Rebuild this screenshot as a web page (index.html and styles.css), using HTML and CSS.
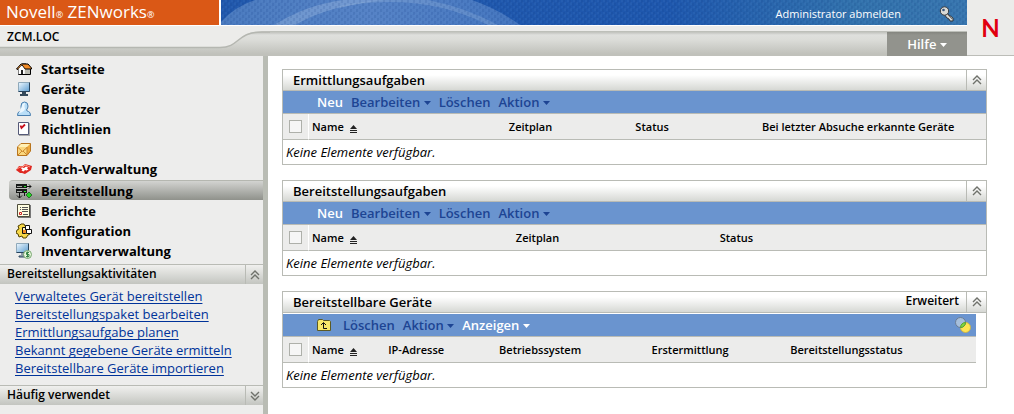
FILE: index.html
```html
<!DOCTYPE html>
<html lang="de">
<head>
<meta charset="utf-8">
<title>Novell ZENworks – Bereitstellung</title>
<link rel="stylesheet" href="styles.css">
</head>
<body>
<svg class="sprites" aria-hidden="true">
  <symbol id="up" viewBox="0 0 10 10"><path d="M1 5l4-4 4 4M1 9l4-4 4 4" fill="none" stroke="#6f716b" stroke-width="1.4"/></symbol>
  <symbol id="down" viewBox="0 0 10 10"><path d="M1 1l4 4 4-4M1 5l4 4 4-4" fill="none" stroke="#6f716b" stroke-width="1.4"/></symbol>
  <symbol id="caret" viewBox="0 0 7 4"><path d="M0 0h7L3.500 4z" fill="currentColor"/></symbol>
  <symbol id="sort" viewBox="0 0 7 8"><path d="M3.500 0L7 4H0zM0 5h7v1H0zM0 7h7v1H0z" fill="#222"/></symbol>
</svg>
<header class="header">
  <div class="header-main">
    <div class="top">
      <div class="brand"><span>Novell<small>®</small> ZENworks<small>®</small></span></div>
      <div class="banner">
        <svg class="swirl" width="746" height="25" viewBox="0 0 746 25" aria-hidden="true">
          <defs>
            <pattern id="weave" width="6" height="6" patternUnits="userSpaceOnUse"><path d="M1 0v3M4 3v3" stroke="#0c3480" stroke-opacity=".25"/><path d="M2 2v3M5 0v2" stroke="#6b9bdf" stroke-opacity=".16"/></pattern>
            <linearGradient id="haze"><stop offset="0" stop-color="#8bb0dc" stop-opacity=".38"/><stop offset=".5" stop-color="#8fb0e0" stop-opacity=".48"/><stop offset="1" stop-color="#7fa5da" stop-opacity=".38"/></linearGradient>
          </defs>
          <path d="M0 22Q13 7 34 0H251Q279 10 299 25H0z" fill="url(#haze)"/>
          <path d="M53 25Q85 5 122 0H165Q108 5 74 25z" fill="#a8c4e4" fill-opacity=".35"/>
          <path d="M119 6Q150 0 165 0H207Q246 8 277 25H267Q220 1 165 2Q140 2 119 8z" fill="#a8c4e4" fill-opacity=".25"/>
          <rect width="746" height="25" fill="url(#weave)"/>
        </svg>
        <a class="logout" href="#">Administrator abmelden</a>
        <svg class="key" width="16" height="16" viewBox="0 0 16 16" aria-hidden="true"><path d="M6 6l8 6v3h-3l-1-2-2-1-3-4z" fill="#d8d8d4" stroke="#35383c"/><circle cx="5.500" cy="5" r="4.200" fill="#d9d9d5" stroke="#35383c"/><circle cx="4.500" cy="4" r="1.300" fill="#35537b"/><path d="M8 8l5 5" stroke="#777"/></svg>
      </div>
    </div>
    <div class="subbar">
      <svg class="curve" width="270" height="30" viewBox="0 0 270 30" aria-hidden="true">
        <path d="M0 0H270V5.500H262C236 5.500 240 21.500 220 21.500H0z" fill="#ececea"/>
        <path d="M0 21.500H220C240 21.500 236 6 262 6H270" fill="none" stroke="#b5b7b1" stroke-width="1.500"/>
      </svg>
      <span class="zone">ZCM.LOC</span>
      <button class="help" type="button">Hilfe <svg width="7" height="4"><use href="#caret"/></svg></button>
    </div>
  </div>
  <div class="logo">N</div>
</header>
<div class="page">
  <aside class="sidebar">
    <nav class="nav">
      <a href="#"><svg width="16" height="16" viewBox="0 0 16 16" aria-hidden="true"><path d="M2.500 8v5.500h12V7L10 3H6z" fill="#fff" stroke="#000"/><path d="M8.500 8h5.500v5H8.500z" fill="#b9b9b0"/><path d="M0.500 8L5 3h7l3.500 4v1H9L6 4 2 8.500z" fill="#f28c28" stroke="#000"/><path d="M2.500 8L5.500 4.500 8.500 8v5h-6z" fill="#fff"/><path d="M5 9h2v4H5z" fill="#222"/></svg>Startseite</a>
      <a href="#"><svg width="16" height="16" viewBox="0 0 16 16" aria-hidden="true"><defs><linearGradient id="scr" x2="1" y2="1"><stop stop-color="#eef8ff"/><stop offset="1" stop-color="#5d9dd0"/></linearGradient></defs><path d="M2.500 1.500h11v9h-11z" fill="url(#scr)" stroke="#8fa9ba"/><path d="M13.500 1.500v9h-11" fill="none" stroke="#27435c"/><path d="M6 11h4v2h2v2H4v-2h2z" fill="#34495a"/></svg>Geräte</a>
      <a href="#"><svg width="16" height="16" viewBox="0 0 16 16" aria-hidden="true"><path d="M5 5q0-4 3.500-4T12 5q0 2-1.500 4 0 1 2 1.500 2 .5 2 4h-13q0-3.500 2-4 2-.5 2-1.500Q5 7 5 5z" fill="#b9def7" stroke="#4a7faf"/><path d="M6 5q0-3 3-3-1 2 0 6-1 3-6 4z" fill="#eaf7ff"/></svg>Benutzer</a>
      <a href="#"><svg width="16" height="16" viewBox="0 0 16 16" aria-hidden="true"><path d="M3 2h11v13H3z" fill="#aaa"/><path d="M2.500 1.500h10v12h-10z" fill="#fff" stroke="#555a78"/><path d="M4.500 4.500l1 2.500 3.500-3.500" fill="none" stroke="#c8101c" stroke-width="1.800"/></svg>Richtlinien</a>
      <a href="#"><svg width="16" height="16" viewBox="0 0 16 16" aria-hidden="true"><path d="M1.500 6L5 2.500h9.500V10L11 14.500H1.500z" fill="#efaa3c" stroke="#b8741d"/><path d="M2 6l3-3h9l-3 3z" fill="#fff0b5"/><path d="M2 6h9v8H2z" fill="#fbd77d"/><path d="M2 6.500l4.500 4L11 6.500M2 14l4-4m5 4l-4-4M11 6v8" stroke="#cb8830" fill="none"/></svg>Bundles</a>
      <a href="#"><svg width="16" height="16" viewBox="0 0 16 16" aria-hidden="true"><path d="M0 9l3-4 4 0 2-2 7 2-1 4-6 4-3-1-2 0z" fill="#df2821"/><path d="M1 8l3-2 3 0 2-2 5 2" stroke="#ff9a88" fill="none"/><path d="M6 6.500l2 .5 2-1.500 2 1-1 1 1.500 1-2 1-1.500-.5-1.500 1.500-2-1 1-1-1.500-1z" fill="#fff"/></svg>Patch-Verwaltung</a>
      <a class="active" href="#" aria-current="page"><svg width="16" height="16" viewBox="0 0 16 16" aria-hidden="true"><path d="M0 1h11v4H0zM0 6h11v4H0z" fill="#171917"/><path d="M1 3.500h5M1 8.500h5" stroke="#a8aaa5"/><path d="M8 3.500h2M8 8.500h2" stroke="#25e425"/><path d="M11 3.500h4M13 1.500l2 2-2 2M3.500 10v5M1 12.500l2.500 2.500L6 12.500M8.500 10v3" stroke="#111" fill="none"/><path d="M13 9l3 3-3 3-3-3z" fill="#23d323" stroke="#174e17" stroke-width=".7"/></svg>Bereitstellung</a>
      <a href="#"><svg width="16" height="16" viewBox="0 0 16 16" aria-hidden="true"><path d="M2 2h13v13H2z" fill="#777"/><path d="M1.500 1.500h12v12h-12z" fill="#fffde0" stroke="#4e4d3c"/><path d="M6 4.500h6M6 6.500h6M6 8.500h6M7 11.500h5M4 4.500h1M4 6.500h1" stroke="#555"/><path d="M3.500 9.500h2v2h-2z" fill="#fff" stroke="#c22"/></svg>Berichte</a>
      <a href="#"><svg width="16" height="16" viewBox="0 0 16 16" aria-hidden="true"><path d="M5 1h3l1 2 3 1 1 3 2 1-1 3-2 1-2 3H7l-1-2-3 1-1-3-2-1 1-3 2-1-1-3 2-1z" fill="#f7d848" stroke="#544300"/><path d="M6.500 4.500h3v6h-3z" fill="#fff7c0" stroke="#111"/><path d="M9.500 2.500h4v4h-4zM10.500 6.500h5v4h-5z" fill="#fff" stroke="#111"/><path d="M7 7h3v3H7z" fill="#f28b25"/></svg>Konfiguration</a>
      <a href="#"><svg width="16" height="16" viewBox="0 0 16 16" aria-hidden="true"><path d="M.5.5h12v9H.5z" fill="url(#scr)" stroke="#8fa9ba"/><path d="M12.500.5v9H.5M5 11h3v2H3v1h6" fill="none" stroke="#27435c"/><circle cx="11.500" cy="11.500" r="4" fill="#e8f6dc" stroke="#76a66e"/><path d="M13 9.500h-2.500v2H13v2h-3M11.500 8.500v6" fill="none" stroke="#368546"/></svg>Inventarverwaltung</a>
    </nav>
    <section>
      <div class="side-head"><h2>Bereitstellungsaktivitäten</h2><button type="button" aria-label="Einklappen"><svg width="10" height="10"><use href="#up"/></svg></button></div>
      <ul class="links">
        <li><a href="#">Verwaltetes Gerät bereitstellen</a></li>
        <li><a href="#">Bereitstellungspaket bearbeiten</a></li>
        <li><a href="#">Ermittlungsaufgabe planen</a></li>
        <li><a href="#">Bekannt gegebene Geräte ermitteln</a></li>
        <li><a href="#">Bereitstellbare Geräte importieren</a></li>
      </ul>
    </section>
    <div class="side-head"><h2>Häufig verwendet</h2><button type="button" aria-label="Ausklappen"><svg width="10" height="10"><use href="#down"/></svg></button></div>
  </aside>
  <main class="content">
    <section class="panel">
      <div class="panel-head"><h2>Ermittlungsaufgaben</h2><button class="fold" type="button" aria-label="Einklappen"><svg width="10" height="10"><use href="#up"/></svg></button></div>
      <div class="toolbar"><button class="on" type="button">Neu</button><button type="button">Bearbeiten <svg width="7" height="4"><use href="#caret"/></svg></button><button type="button">Löschen</button><button type="button">Aktion <svg width="7" height="4"><use href="#caret"/></svg></button></div>
      <table class="tasks">
        <thead><tr><th class="check"><input type="checkbox" aria-label="Alle auswählen"></th><th class="name">Name <svg width="7" height="8"><use href="#sort"/></svg></th><th class="plan">Zeitplan</th><th class="state">Status</th><th>Bei letzter Absuche erkannte Geräte</th></tr></thead>
        <tbody><tr><td colspan="5">Keine Elemente verfügbar.</td></tr></tbody>
      </table>
    </section>
    <section class="panel">
      <div class="panel-head"><h2>Bereitstellungsaufgaben</h2><button class="fold" type="button" aria-label="Einklappen"><svg width="10" height="10"><use href="#up"/></svg></button></div>
      <div class="toolbar"><button class="on" type="button">Neu</button><button type="button">Bearbeiten <svg width="7" height="4"><use href="#caret"/></svg></button><button type="button">Löschen</button><button type="button">Aktion <svg width="7" height="4"><use href="#caret"/></svg></button></div>
      <table class="deployments">
        <thead><tr><th class="check"><input type="checkbox" aria-label="Alle auswählen"></th><th class="name">Name <svg width="7" height="8"><use href="#sort"/></svg></th><th class="plan">Zeitplan</th><th>Status</th></tr></thead>
        <tbody><tr><td colspan="4">Keine Elemente verfügbar.</td></tr></tbody>
      </table>
    </section>
    <section class="panel">
      <div class="panel-head"><h2>Bereitstellbare Geräte</h2><a class="advanced" href="#">Erweitert</a><button class="fold" type="button" aria-label="Einklappen"><svg width="10" height="10"><use href="#up"/></svg></button></div>
      <div class="inset">
        <div class="toolbar"><button class="folder" type="button" aria-label="Übergeordneter Ordner"><svg width="14" height="12" viewBox="0 0 14 12"><path d="M.5 2.500l1-2h4l1 1h6l1 1v9H.5z" fill="#f8e96b" stroke="#5c5a24"/><path d="M10 9.500H6.500V4M4 6l2.500-2.500L9 6" fill="none" stroke="#111"/></svg></button><button type="button">Löschen</button><button type="button">Aktion <svg width="7" height="4"><use href="#caret"/></svg></button><button class="on" type="button">Anzeigen <svg width="7" height="4"><use href="#caret"/></svg></button>
          <svg class="venn" width="16" height="16" viewBox="0 0 16 16" aria-hidden="true"><circle cx="10.500" cy="10.500" r="5" fill="#ffe552" stroke="#c9b34c"/><circle cx="5.500" cy="5.500" r="5" fill="#a6bfdc" stroke="#6c7d93"/><path d="M5.500 10.500a5 5 0 0 1 5-5 5 5 0 0 1-5 5z" fill="#86d53e" stroke="#58a62c"/></svg></div>
        <table class="devices">
          <thead><tr><th class="check"><input type="checkbox" aria-label="Alle auswählen"></th><th class="name">Name <svg width="7" height="8"><use href="#sort"/></svg></th><th class="ip">IP-Adresse</th><th class="os">Betriebssystem</th><th class="first">Erstermittlung</th><th>Bereitstellungsstatus</th></tr></thead>
          <tbody><tr><td colspan="6">Keine Elemente verfügbar.</td></tr></tbody>
        </table>
      </div>
    </section>
  </main>
</div>
</body>
</html>
```
FILE: styles.css
```css
* { box-sizing: border-box; }
body { margin: 0; display: flex; flex-direction: column; min-height: 100vh; background: #fff; color: #000; font: 12px/18px "Open Sans", "Noto Sans", sans-serif; }
h2, ul { margin: 0; padding: 0; }
h2 { font-weight: 600; }
button { margin: 0; padding: 0; border: 0; background: none; color: inherit; font: inherit; }
.sprites { position: absolute; width: 0; height: 0; }

.header { display: flex; height: 56px; }
.header-main { flex: 1; }
.top { display: flex; height: 26px; border-bottom: 1px solid #fff; }
.brand { display: flex; align-items: center; width: 221px; padding: 1px 0 0 6px; border-right: 2px solid #fff; background: #da5816; color: #fff; font-size: 17px; line-height: 24px; }
.brand small { font-size: 9px; }
.banner { position: relative; flex: 1; display: flex; align-items: center; justify-content: flex-end; gap: 38px; padding: 2px 12px 0 0; overflow: hidden; background: linear-gradient(90deg, #2158ac 0, #1e57ad 60%, #3272ac 85%, #3876ae); }
.swirl { position: absolute; left: 0; top: 0; }
.logout { position: relative; color: #fff; font-size: 11px; text-decoration: none; }
.key { position: relative; }
.subbar { position: relative; display: flex; height: 30px; justify-content: space-between; background: linear-gradient(#ececea 5px, #b9bbb5 5px, #c9cac6 7px, #dfe0dd 9px, #dbdcd8 14px, #c0c1bb 28px, #c0c1bb); }
.curve { position: absolute; left: 0; top: 0; }
.zone { position: relative; padding: 2px 0 0 7px; font-size: 12px; font-weight: 600; }
.help { align-self: flex-end; width: 80px; height: 24px; background: linear-gradient(#84857f, #92938d 3px); color: #fff; font-size: 13px; font-weight: 600; }
.help svg, .toolbar button svg { vertical-align: 2px; }
.logo { display: flex; align-items: center; justify-content: center; width: 47px; border-bottom: 1px solid #bcbdb8; background: #ececea; color: #e1000f; font: 700 24px/24px Lato, sans-serif; }

.page { flex: 1; display: flex; }
.sidebar { width: 268px; border-right: 5px solid #b9bcb4; background: #ededec; }
.nav { padding: 3px 0; }
.nav a { display: flex; align-items: center; gap: 9px; height: 20px; margin-left: 9px; padding-left: 7px; color: #000; font-size: 13px; font-weight: 700; text-decoration: none; }
.nav .active { margin-top: 1px; margin-bottom: 1px; border-top: 1px solid #b5b7b0; border-radius: 4px 0 0 4px; background: linear-gradient(#d3d4d1, #8f918b); }
.side-head { display: flex; height: 20px; padding-left: 7px; border-top: 1px solid #b9bbb5; background: linear-gradient(#f0f0ee, #c3c5c0); }
.side-head h2 { flex: 1; font-size: 12px; }
.side-head button { display: grid; place-items: center; width: 18px; border-left: 1px solid #b9bbb5; }
.links { padding: 3px 0 8px 15px; font-size: 13px; list-style: none; }
.links a { color: #003399; text-underline-offset: 2px; text-decoration-skip-ink: none; }

.content { flex: 1; display: flex; flex-direction: column; gap: 15px; padding: 13px 27px 13px 14px; }
.panel { border: 1px solid #b9bbb5; background: #fff; }
.panel-head { display: flex; height: 21px; border-bottom: 1px solid #b9bbb5; background: linear-gradient(#fff 25%, #d6d8d4); }
.panel-head h2 { flex: 1; padding-left: 10px; font-size: 13px; line-height: 20px; }
.fold { display: grid; place-items: center; width: 20px; border-left: 1px solid #b9bbb5; }
.advanced { padding-right: 7px; color: #000; font-weight: 600; text-decoration: none; }
.toolbar { display: flex; align-items: center; gap: 8px; height: 23px; padding: 0 5px 0 34px; border-bottom: 1px solid #b9bbb5; background: #6a94cf; color: #1d4493; font-size: 13px; font-weight: 600; }
.toolbar .on { color: #fff; }
.toolbar .folder { padding-right: 4px; }
.toolbar .folder svg { display: block; }
.venn { margin-left: auto; }
.inset { margin-right: 10px; padding-top: 1px; }
table { width: 100%; border-collapse: separate; border-spacing: 0; table-layout: fixed; }
th { height: 26px; padding: 0 3px; border-bottom: 1px solid #b9bbb5; background: #ececeb; font-size: 11px; font-weight: 600; text-align: left; white-space: nowrap; }
th svg { margin-left: 3px; vertical-align: -2px; }
.check { width: 26px; padding: 0 0 0 6px; border-right: 1px solid #fff; }
.check input { display: block; appearance: none; width: 13px; height: 13px; margin: 0; border: 1px solid #aeb0aa; background: #f6f6f6; }
td { height: 24px; padding: 0 3px; font-size: 13px; font-style: italic; }
.tasks .name { width: 28%; }
.tasks .plan, .tasks .state { width: 18%; }
.deployments .name, .deployments .plan { width: 29%; }
.devices .name { width: 11%; }
.devices .ip { width: 16%; }
.devices .os { width: 22%; }
.devices .first { width: 20%; }
```
